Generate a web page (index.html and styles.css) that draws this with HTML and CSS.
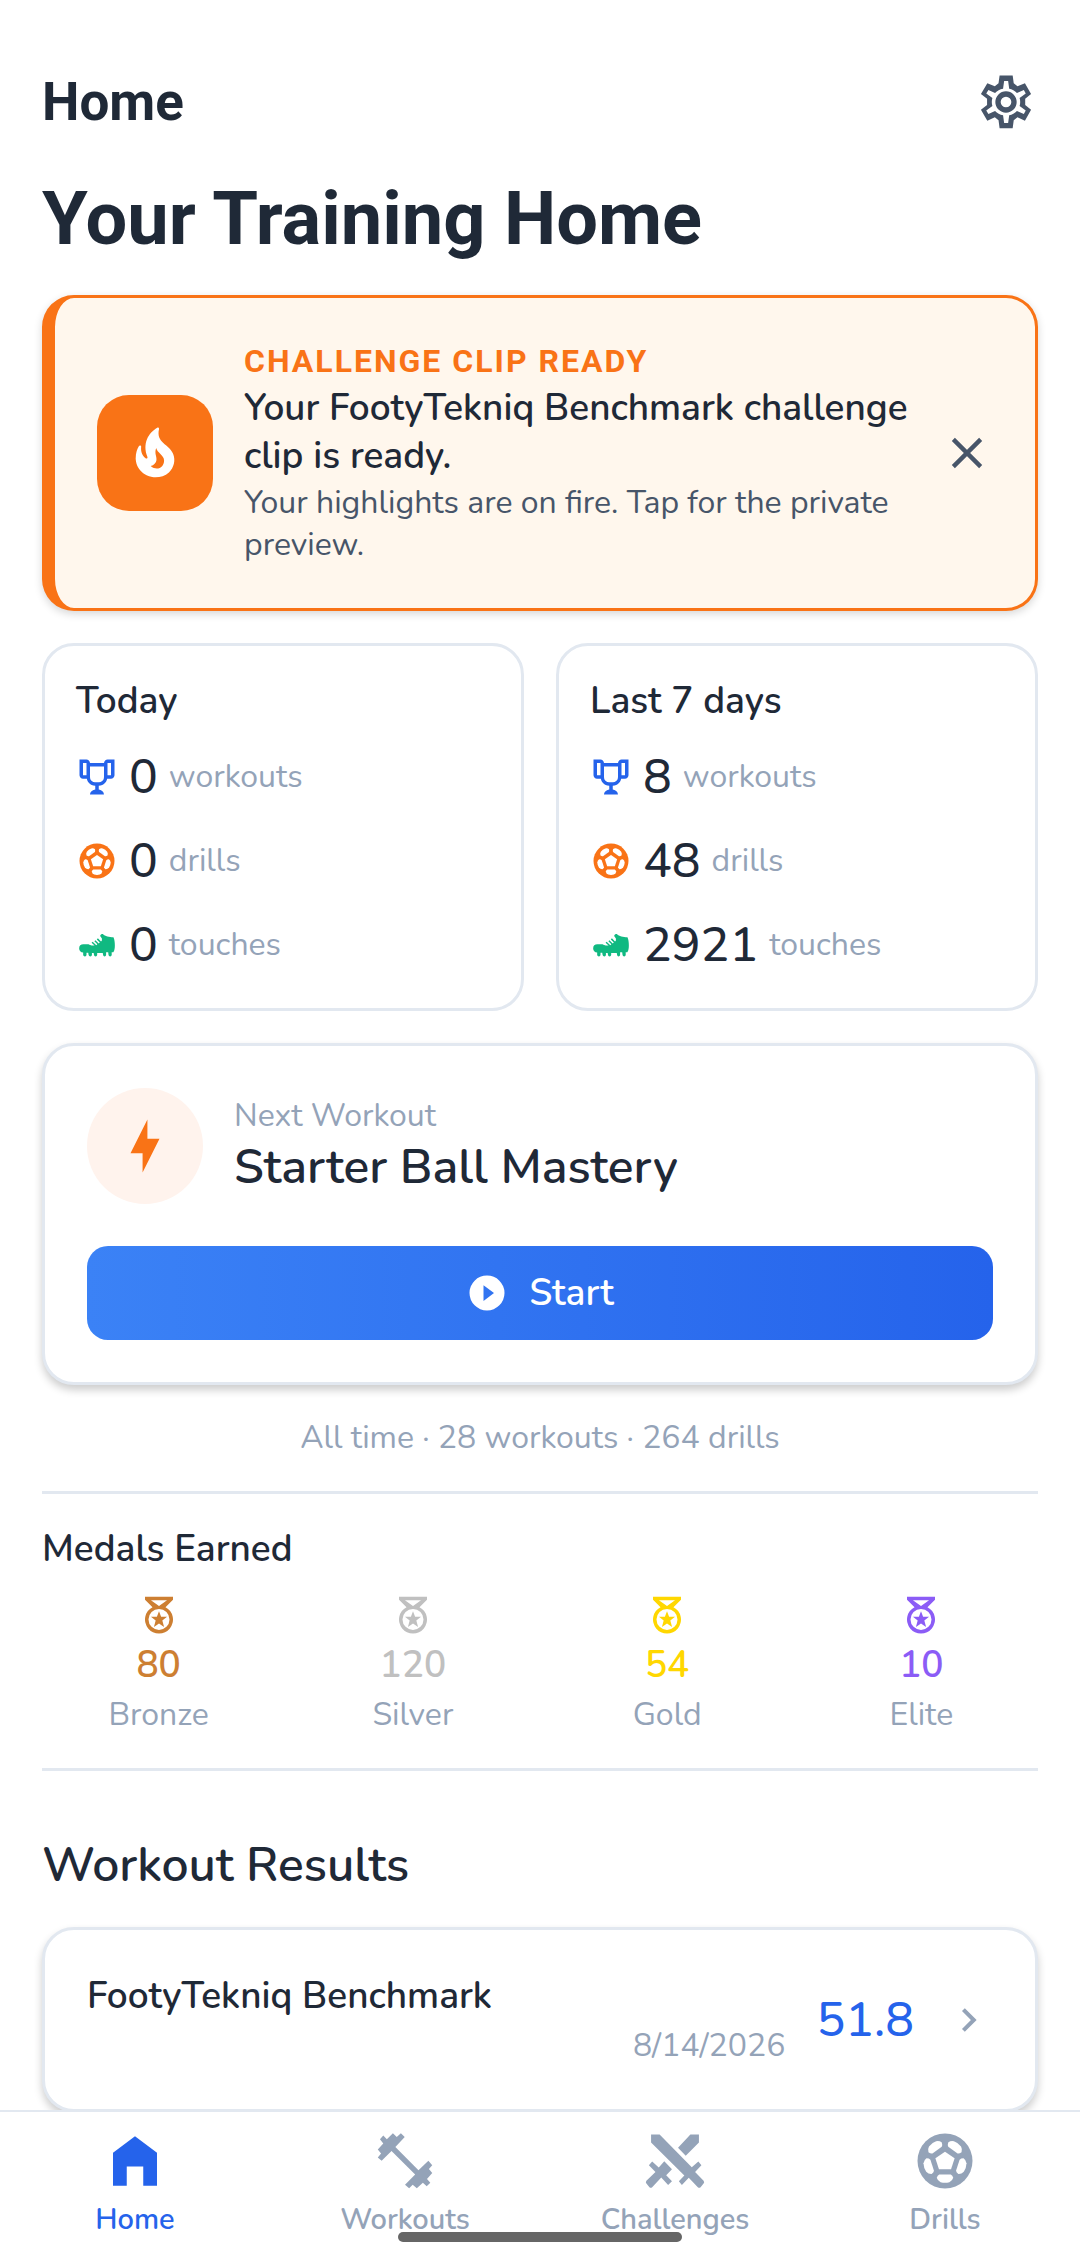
FILE: index.html
```
<!DOCTYPE html>
<html lang="en">
<head>
    <meta charset="UTF-8">
    <meta name="viewport" content="width=device-width, initial-scale=1">
    <title>Home</title>
    <link rel="stylesheet" href="styles.css">
</head>
<body>
    <!-- Shared icons -->
    <svg class="sprite" aria-hidden="true">
        <symbol id="trophy" viewBox="0 0 24 24">
            <path d="M18 2C17.1 2 16 3 16 4H8C8 3 6.9 2 6 2H2V11C2 12 3 13 4 13H6.2C6.6 15 7.9 16.7 11 17V19.08C8 19.54 8 22 8 22H16C16 22 16 19.54 13 19.08V17C16.1 16.7 17.4 15 17.8 13H20C21 13 22 12 22 11V2H18M6 11H4V4H6V11M16 11.5C16 13.43 15.42 15 12 15C8.59 15 8 13.43 8 11.5V6H16V11.5M20 11H18V4H20V11Z"/>
        </symbol>
        <symbol id="ball" viewBox="0 0 24 24">
            <mask id="ball-mask" maskUnits="userSpaceOnUse" x="0" y="0" width="24" height="24">
                <rect width="24" height="24" fill="#fff"/>
                <path d="M12 8.6L15.5 11L14.2 15H9.8L8.5 11Z"/>
                <path id="panel" d="M9.9 16.9H14.1Q14.7 17.2 15 18.1Q14.7 19.2 13.6 19.7Q12 20.2 10.4 19.7Q9.3 19.2 9 18.1Q9.3 17.2 9.9 16.9Z"/>
                <use href="#panel" transform="rotate(72 12 12)"/>
                <use href="#panel" transform="rotate(144 12 12)"/>
                <use href="#panel" transform="rotate(216 12 12)"/>
                <use href="#panel" transform="rotate(288 12 12)"/>
            </mask>
            <circle cx="12" cy="12" r="10" mask="url(#ball-mask)"/>
        </symbol>
        <symbol id="boot" viewBox="0 0 24 24">
            <path d="M1.8 14C1.8 12.4 2.7 11.6 4.2 11.6H7.2C7.8 11.9 8.4 12.3 9 12.3H10.6L8.9 10.7L9.5 10.2L11.6 12.1L12.2 11.6L10.5 9.8L11.1 9.3L13 11.2L13.6 10.6L11.9 8.8L12.5 8.2L14.3 10L14.8 9.4V8.3L13.8 6.8C14 6 14.8 5.6 15.5 5.8C16.5 7 19 7.5 21.4 7.5C22 8.8 22.2 10.4 22.2 12.2C22.2 14 22 15.3 21.3 16.2H20.4V17.7Q20.3 18.5 19.5 18.5Q18.7 18.5 18.6 17.7L18.4 16.2H17.2V17.7Q17.1 18.5 16.3 18.5Q15.6 18.5 15.5 17.7L15.3 16.6H12.1V17.7Q12 18.5 11.2 18.5Q10.4 18.5 10.3 17.7L10.1 16.6H9.1V17.7Q9 18.5 8.2 18.5Q7.4 18.5 7.2 17.7L7 16.4H6V17.7Q5.9 18.5 5.1 18.5Q4.2 18.5 4.1 17.7V16.3C2.7 16.3 1.8 15.3 1.8 14Z"/>
        </symbol>
        <symbol id="medal" viewBox="0 0 24 24">
            <path fill-rule="evenodd" d="M4 1.5H20V3.3L15.7 7.5A8 8 0 1 1 8.3 7.5L4 3.3ZM7.4 3.5L12 6.8L16.6 3.5ZM12 8.5A6 6 0 1 0 12 20.5A6 6 0 1 0 12 8.5Z"/>
            <path d="M12 9.8L13.2 13H16.6L13.9 15.2L14.9 18.9L12 16.8L9.1 18.9L10.1 15.2L7.4 13H10.8Z"/>
        </symbol>
    </svg>

    <header class="top-bar">
        <span class="top-title">Home</span>
        <button class="icon-button" type="button" aria-label="Settings">
            <svg class="icon icon-gear" viewBox="0 0 24 24"><path fill-rule="evenodd" d="M9.6 2.1H14.5L14.9 5L16.3 6.1L19.1 5L21.4 9L19.2 10.8V13.1L21.4 14.9L19.1 19L16.3 17.7L14.9 18.8L14.5 21.8H9.6L9.2 18.8L7.8 17.7L5 19L2.6 14.9L4.9 13.1V10.8L2.6 9L5 5L7.8 6.1L9.2 5ZM11.3 4.1L10.9 7C9.7 7.2 8.7 7.8 7.9 8.6L5.4 7.5L4.6 8.8L6.9 10.5C6.6 11.5 6.6 12.5 6.9 13.5L4.6 15.2L5.4 16.5L7.9 15.4C8.7 16.2 9.7 16.8 10.9 17L11.3 19.9H12.8L13.2 17C14.3 16.8 15.3 16.2 16.1 15.4L18.7 16.5L19.4 15.2L17.1 13.5C17.4 12.5 17.4 11.5 17.1 10.5L19.4 8.8L18.7 7.5L16.1 8.6C15.3 7.8 14.3 7.2 13.2 7L12.8 4.1ZM12 8A4 4 0 1 1 12 16A4 4 0 1 1 12 8ZM12 10A2 2 0 1 0 12 14A2 2 0 1 0 12 10Z"/></svg>
        </button>
    </header>

    <main class="content">
        <h1 class="page-title">Your Training Home</h1>

        <!-- Challenge banner -->
        <section class="banner">
            <div class="banner-icon">
                <svg class="icon icon-md" viewBox="0 0 24 24"><path d="M19.48,12.35c-1.57-4.08-7.16-4.3-5.81-10.23c0.1-0.44-0.37-0.78-0.75-0.55C9.29,3.71,6.68,8,8.87,13.62c0.18,0.46-0.36,0.89-0.75,0.59c-1.81-1.37-2-3.34-1.84-4.75c0.06-0.52-0.62-0.77-0.91-0.34C4.69,10.16,4,11.84,4,14.37c0.38,5.6,5.11,7.32,6.81,7.54c2.43,0.31,5.06-0.14,6.95-1.87C19.84,18.11,20.6,15.03,19.48,12.35z M10.2,17.38c1.44-0.35,2.18-1.39,2.38-2.31c0.33-1.43-0.96-2.83-0.09-5.09c0.33,1.87,3.27,3.04,3.27,5.08C15.84,17.59,13.1,19.76,10.2,17.38z"/></svg>
            </div>
            <div class="banner-text">
                <p class="eyebrow">CHALLENGE CLIP READY</p>
                <h2 class="title">Your FootyTekniq Benchmark challenge clip is ready.</h2>
                <p class="banner-note">Your highlights are on fire. Tap for the private preview.</p>
            </div>
            <button class="icon-button" type="button" aria-label="Dismiss">
                <svg class="icon icon-close" viewBox="0 0 24 24"><path d="M5.7 5.7L18.3 18.3M18.3 5.7L5.7 18.3"/></svg>
            </button>
        </section>

        <!-- Stats -->
        <div class="stats">
            <section class="card stat-card">
                <h2 class="title">Today</h2>
                <ul class="stat-list">
                    <li class="stat"><svg class="icon icon-sm blue"><use href="#trophy"/></svg><span class="number">0</span><span class="label">workouts</span></li>
                    <li class="stat"><svg class="icon icon-sm orange"><use href="#ball"/></svg><span class="number">0</span><span class="label">drills</span></li>
                    <li class="stat"><svg class="icon icon-sm green"><use href="#boot"/></svg><span class="number">0</span><span class="label">touches</span></li>
                </ul>
            </section>
            <section class="card stat-card">
                <h2 class="title">Last 7 days</h2>
                <ul class="stat-list">
                    <li class="stat"><svg class="icon icon-sm blue"><use href="#trophy"/></svg><span class="number">8</span><span class="label">workouts</span></li>
                    <li class="stat"><svg class="icon icon-sm orange"><use href="#ball"/></svg><span class="number">48</span><span class="label">drills</span></li>
                    <li class="stat"><svg class="icon icon-sm green"><use href="#boot"/></svg><span class="number">2921</span><span class="label">touches</span></li>
                </ul>
            </section>
        </div>

        <!-- Next workout -->
        <section class="card raised">
            <div class="next-head">
                <div class="next-icon">
                    <svg class="icon icon-md orange" viewBox="0 0 24 24"><path d="M11 15H6L13 1V9H18L11 23V15Z"/></svg>
                </div>
                <div>
                    <p class="label">Next Workout</p>
                    <h2 class="heading">Starter Ball Mastery</h2>
                </div>
            </div>
            <button class="start-button title" type="button">
                <svg class="icon icon-sm" viewBox="0 0 24 24"><path d="M10 16.5V7.5L16 12M12 2A10 10 0 0 0 2 12A10 10 0 0 0 12 22A10 10 0 0 0 22 12A10 10 0 0 0 12 2Z"/></svg>
                <span>Start</span>
            </button>
        </section>

        <p class="label all-time">All time · 28 workouts · 264 drills</p>

        <!-- Medals -->
        <section class="medals">
            <h2 class="title">Medals Earned</h2>
            <ul class="medal-list">
                <li class="medal"><svg class="icon icon-sm bronze"><use href="#medal"/></svg><span class="title bronze">80</span><span class="label">Bronze</span></li>
                <li class="medal"><svg class="icon icon-sm silver"><use href="#medal"/></svg><span class="title silver">120</span><span class="label">Silver</span></li>
                <li class="medal"><svg class="icon icon-sm gold"><use href="#medal"/></svg><span class="title gold">54</span><span class="label">Gold</span></li>
                <li class="medal"><svg class="icon icon-sm elite"><use href="#medal"/></svg><span class="title elite">10</span><span class="label">Elite</span></li>
            </ul>
        </section>

        <!-- Results -->
        <h2 class="heading results-heading">Workout Results</h2>
        <a class="card raised result" href="#result">
            <span class="result-text">
                <span class="title">FootyTekniq Benchmark</span>
                <span class="label result-date">8/14/2026</span>
            </span>
            <span class="number blue">51.8</span>
            <svg class="icon icon-chevron" viewBox="0 0 24 24"><path d="M9.2 6.8L14.4 12L9.2 17.2"/></svg>
        </a>
    </main>

    <nav class="tabs">
        <a class="tab active" href="#home">
            <svg class="icon icon-tab" viewBox="0 0 24 24"><path d="M4 21V9L12 3L20 9V21H15V14H9V21Z"/></svg>
            <span>Home</span>
        </a>
        <a class="tab" href="#workouts">
            <svg class="icon icon-tab" viewBox="0 0 24 24"><path d="M4.1 2.7L5.4 4.1L7.6 1.9L9 3.3L10.5 1.9L11.9 3.3L8.5 6.9L16.9 15.4L20.5 11.9L21.9 13.5L20.7 14.9L21.9 16.4L20 18.5L21.2 19.9L19.9 21.2L18.5 19.9L16.3 21.9L14.8 20.6L13.5 21.9L12 20.6L15.7 16.9L7.1 8.4L3.5 11.9L2.1 10.7L3.3 9.3L2.1 7.8L4.1 5.6L2.9 4.1Z"/></svg>
            <span>Workouts</span>
        </a>
        <a class="tab" href="#challenges">
            <svg class="icon icon-tab" viewBox="0 0 24 24"><path d="M3.3 2.4H6.4L18.1 14.3L20.5 12.2L21.6 13.5L19.3 16L22.4 19.2Q22.8 19.7 22.4 20.2L21.3 21.5Q20.8 21.9 20.3 21.5L17 18.1L14.5 20.7L13.4 19.4L15.4 17.3L3.3 5.3ZM17.6 2.4H20.7V5.3L15.9 10.1L13.1 7.2ZM3.7 12.2L6.1 14.4L8.1 12.1L10.9 15L8.8 17.2L10.9 19.4L9.5 20.7L7 18L3.7 21.5Q3.2 21.9 2.7 21.5L1.6 20.2Q1.2 19.7 1.6 19.2L4.9 16L2.5 13.5Z"/></svg>
            <span>Challenges</span>
        </a>
        <a class="tab" href="#drills">
            <svg class="icon icon-tab"><use href="#ball"/></svg>
            <span>Drills</span>
        </a>
        <div class="home-indicator"></div>
    </nav>
</body>
</html>
```

FILE: styles.css
```
* {
    box-sizing: border-box;
}

body {
    display: flex;
    flex-direction: column;
    height: 100vh;
    margin: 0;
    background-color: #fff;
    color: #1f2937;
    font-family: Nunito, Lato, sans-serif;
    overflow: hidden;
}

h1,
h2,
p,
ul {
    margin: 0;
    padding: 0;
    font-weight: 400;
}

ul {
    list-style: none;
}

a {
    color: inherit;
    text-decoration: none;
}

button {
    border: 0;
    padding: 0;
    font-family: inherit;
    cursor: pointer;
}

/* Icons */
.sprite {
    position: absolute;
    width: 0;
    height: 0;
}

.icon {
    display: block;
    flex: none;
    fill: currentColor;
}

.icon-sm {
    width: 42px;
    height: 42px;
}

.icon-md {
    width: 58px;
    height: 58px;
}

.icon-gear {
    width: 64px;
    height: 64px;
}

.icon-close,
.icon-chevron {
    width: 52px;
    height: 52px;
    fill: none;
    stroke: currentColor;
    stroke-width: 2;
}

.icon-chevron {
    width: 48px;
    height: 48px;
    color: #94a3b8;
}

.icon-tab {
    width: 66px;
    height: 66px;
}

.icon-button {
    background: none;
    color: #475569;
}

/* Text */
.title {
    font-size: 37px;
    font-weight: 600;
    line-height: 48px;
}

.heading {
    font-size: 48px;
    font-weight: 600;
    line-height: 60px;
}

.number {
    font-size: 48px;
    font-weight: 500;
    line-height: 64px;
}

.label {
    font-size: 32px;
    line-height: 42px;
    color: #94a3b8;
}

.blue {
    color: #2563eb;
}

.orange {
    color: #f97316;
}

.green {
    color: #10b981;
}

.bronze {
    color: #cd7f32;
}

.silver {
    color: #c0c0c0;
}

.gold {
    color: #ffd700;
}

.elite {
    color: #8b5cf6;
}

/* Header */
.top-bar {
    display: flex;
    justify-content: space-between;
    align-items: center;
    flex: none;
    padding: 69px 42px 0;
}

.top-title {
    font-family: Roboto, sans-serif;
    font-size: 53px;
    font-weight: 700;
    line-height: 66px;
}

.content {
    flex: 1;
    min-height: 0;
    padding: 40px 42px 0;
    overflow-y: auto;
    scrollbar-width: none;
}

.page-title {
    margin-bottom: 32px;
    font-family: Roboto, sans-serif;
    font-size: 74px;
    font-weight: 700;
    line-height: 88px;
}

/* Challenge banner */
.banner {
    display: flex;
    align-items: center;
    gap: 31px;
    padding: 42px;
    border: 3px solid #f97316;
    border-left-width: 13px;
    border-radius: 32px;
    background-color: #fff7ed;
    box-shadow: 0 3px 8px rgba(0, 0, 0, 0.16);
}

.banner-icon {
    display: flex;
    justify-content: center;
    align-items: center;
    flex: none;
    width: 116px;
    height: 116px;
    border-radius: 32px;
    background-color: #f97316;
    color: #fff;
}

.banner-text {
    display: flex;
    flex-direction: column;
    flex: 1;
    gap: 2px;
}

.eyebrow {
    font-family: Roboto, sans-serif;
    font-size: 32px;
    font-weight: 700;
    line-height: 42px;
    letter-spacing: 2px;
    color: #f97316;
}

.banner-note {
    font-size: 32px;
    line-height: 42px;
    color: #475569;
}

/* Cards */
.card {
    border: 3px solid #e2e8f0;
    border-radius: 32px;
    background-color: #fff;
}

.raised {
    padding: 42px;
    box-shadow: 0 5px 8px rgba(0, 0, 0, 0.2);
}

.stats {
    display: grid;
    grid-template-columns: 1fr 1fr;
    gap: 32px;
    margin: 32px 0;
}

.stat-card {
    padding: 31px;
}

.stat-list {
    display: flex;
    flex-direction: column;
    gap: 20px;
    margin-top: 20px;
}

.stat {
    display: flex;
    align-items: center;
    gap: 11px;
}

/* Next workout */
.next-head {
    display: flex;
    align-items: center;
    gap: 31px;
    margin-bottom: 42px;
}

.next-icon {
    display: flex;
    justify-content: center;
    align-items: center;
    width: 116px;
    height: 116px;
    border-radius: 50%;
    background-color: #fff3ed;
}

.start-button {
    display: flex;
    justify-content: center;
    align-items: center;
    gap: 21px;
    width: 100%;
    padding: 23px;
    border-radius: 21px;
    background: linear-gradient(90deg, #3b82f6, #2563eb);
    color: #fff;
}

.all-time {
    padding: 32px 0;
    border-bottom: 3px solid #e2e8f0;
    text-align: center;
}

/* Medals */
.medals {
    padding: 31px 0 32px;
    border-bottom: 3px solid #e2e8f0;
}

.medal-list {
    display: grid;
    grid-template-columns: repeat(4, 1fr);
    gap: 21px;
    margin-top: 21px;
}

.medal {
    display: flex;
    flex-direction: column;
    align-items: center;
    gap: 5px;
}

/* Results */
.results-heading {
    margin: 64px 0 32px;
}

.result {
    display: flex;
    align-items: center;
    gap: 31px;
}

.result-text {
    display: flex;
    flex-direction: column;
    flex: 1;
    gap: 5px;
}

.result-date {
    text-align: right;
}

/* Bottom tabs */
.tabs {
    position: relative;
    display: grid;
    grid-template-columns: repeat(4, 1fr);
    flex: none;
    padding: 16px 0 24px;
    border-top: 2px solid #e2e8f0;
    background-color: #fff;
}

.tab {
    display: flex;
    flex-direction: column;
    align-items: center;
    gap: 2px;
    color: #94a3b8;
    font-size: 29px;
    font-weight: 600;
    line-height: 48px;
}

.tab.active {
    color: #2563eb;
}

.home-indicator {
    position: absolute;
    bottom: 26px;
    left: 50%;
    width: 284px;
    height: 10px;
    border-radius: 5px;
    background-color: #666;
    transform: translateX(-50%);
}
```
